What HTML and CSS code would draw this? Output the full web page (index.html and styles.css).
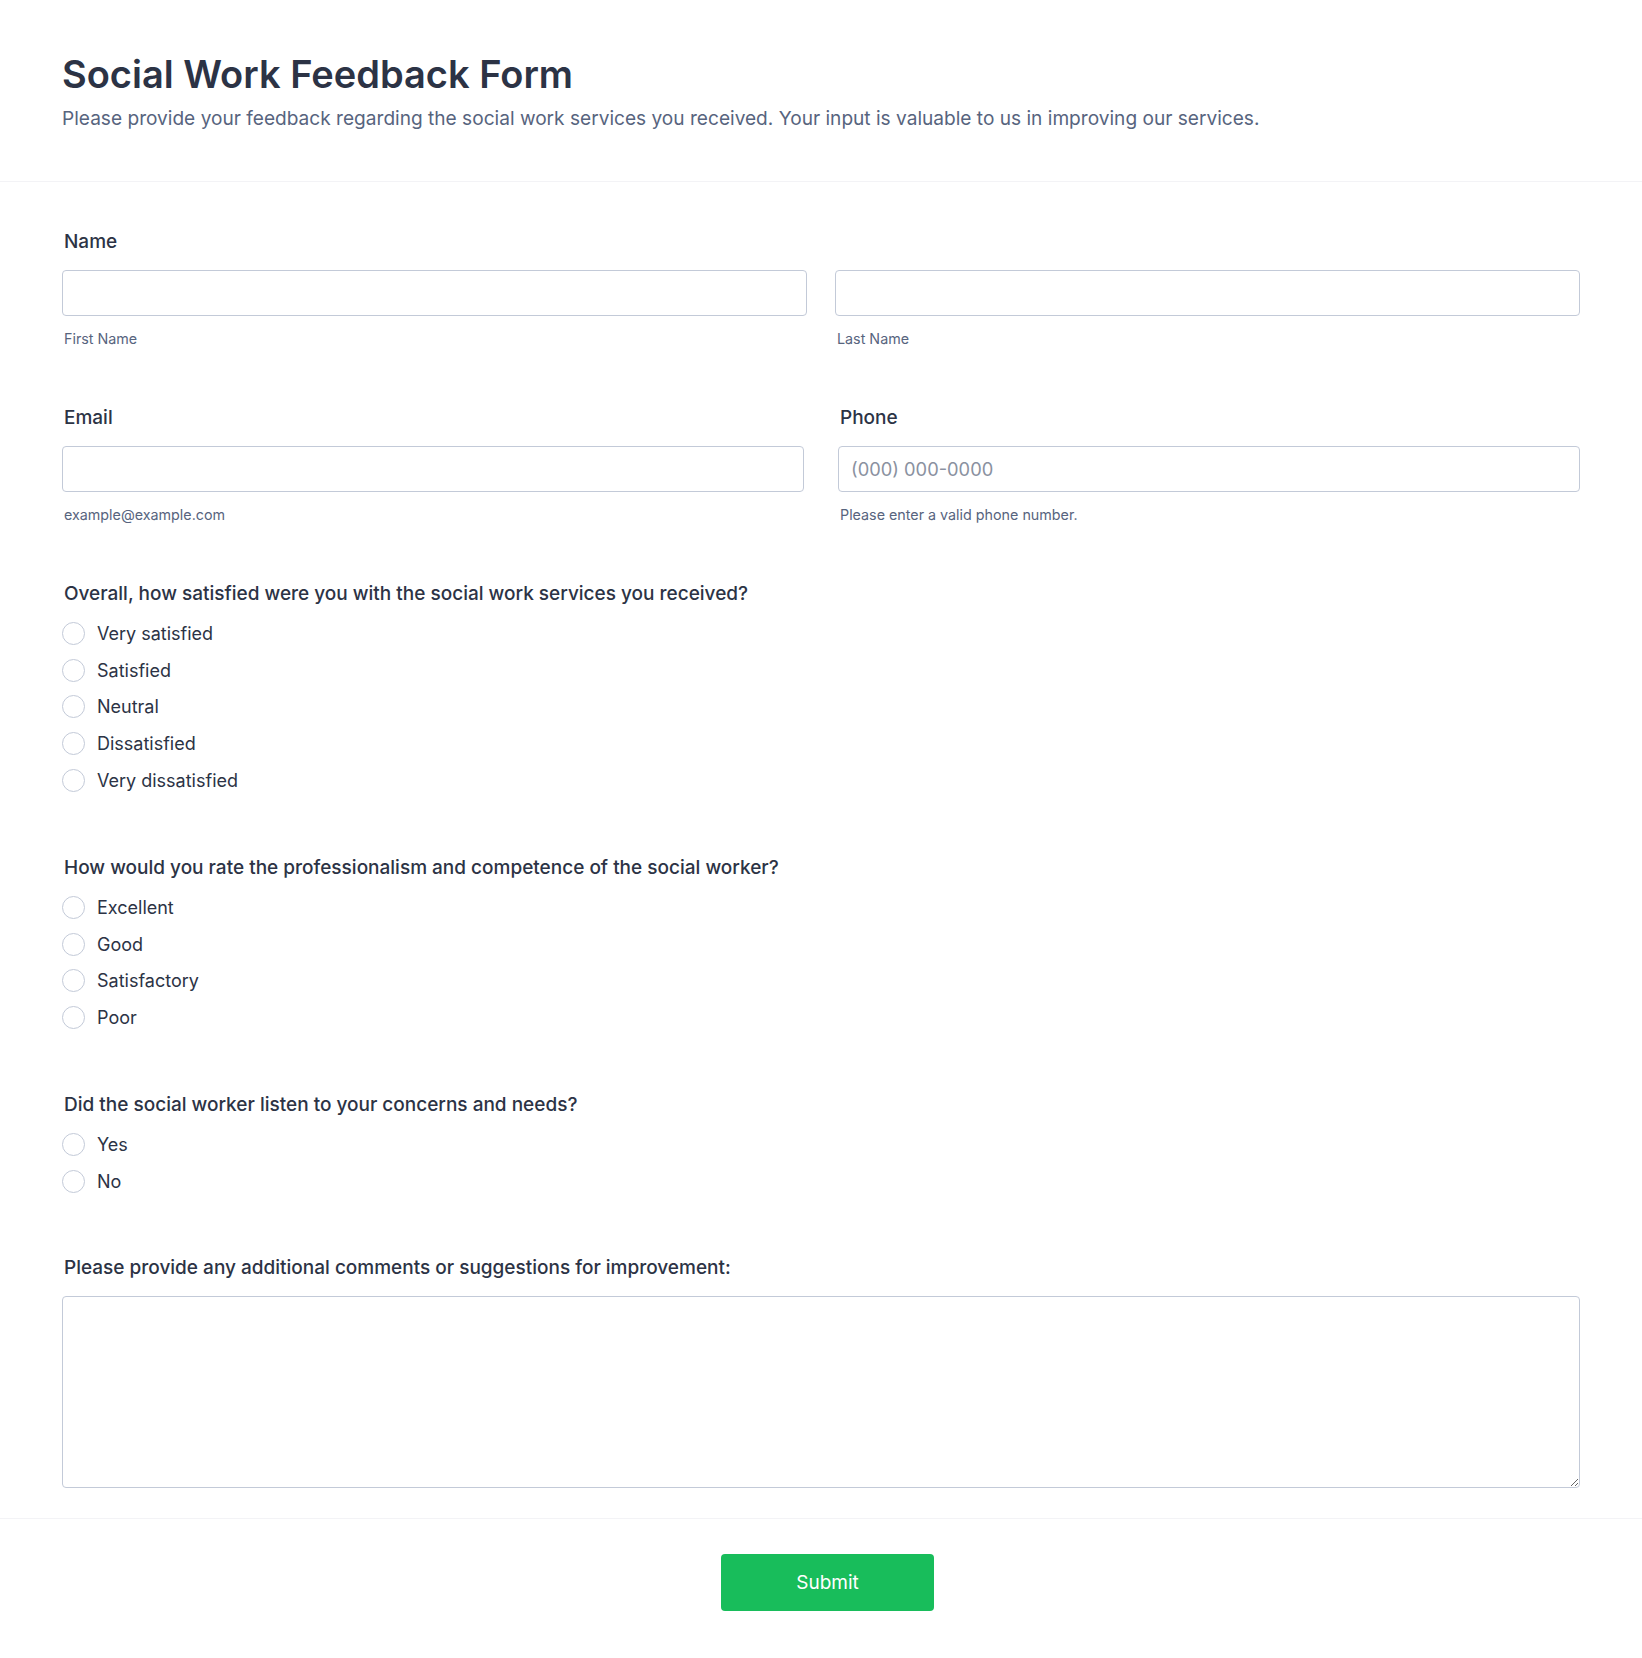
FILE: index.html
```html
<!DOCTYPE html>
<html lang="en">
<head>
<meta charset="utf-8">
<title>Social Work Feedback Form</title>
<link rel="stylesheet" href="styles.css">
</head>
<body>
<header class="form-header">
  <h1 class="form-title">Social Work Feedback Form</h1>
  <p class="form-subtitle">Please provide your feedback regarding the social work services you received. Your input is valuable to us in improving our services.</p>
</header>

<form class="form-body">
  <div class="field field-name">
    <div class="label">Name</div>
    <div class="row row-name">
      <div class="col">
        <input class="text-input" type="text">
        <div class="sublabel">First Name</div>
      </div>
      <div class="col">
        <input class="text-input" type="text">
        <div class="sublabel">Last Name</div>
      </div>
    </div>
  </div>

  <div class="field field-contact">
    <div class="row row-contact">
      <div class="col">
        <div class="label">Email</div>
        <input class="text-input" type="email">
        <div class="sublabel">example@example.com</div>
      </div>
      <div class="col">
        <div class="label">Phone</div>
        <input class="text-input" type="tel" placeholder="(000) 000-0000">
        <div class="sublabel">Please enter a valid phone number.</div>
      </div>
    </div>
  </div>

  <div class="field field-q">
    <div class="label label-q">Overall, how satisfied were you with the social work services you received?</div>
    <div class="options">
      <label class="option"><input type="radio" name="q1"><span>Very satisfied</span></label>
      <label class="option"><input type="radio" name="q1"><span>Satisfied</span></label>
      <label class="option"><input type="radio" name="q1"><span>Neutral</span></label>
      <label class="option"><input type="radio" name="q1"><span>Dissatisfied</span></label>
      <label class="option"><input type="radio" name="q1"><span>Very dissatisfied</span></label>
    </div>
  </div>

  <div class="field field-q">
    <div class="label label-q">How would you rate the professionalism and competence of the social worker?</div>
    <div class="options">
      <label class="option"><input type="radio" name="q2"><span>Excellent</span></label>
      <label class="option"><input type="radio" name="q2"><span>Good</span></label>
      <label class="option"><input type="radio" name="q2"><span>Satisfactory</span></label>
      <label class="option"><input type="radio" name="q2"><span>Poor</span></label>
    </div>
  </div>

  <div class="field field-q">
    <div class="label label-q">Did the social worker listen to your concerns and needs?</div>
    <div class="options">
      <label class="option"><input type="radio" name="q3"><span>Yes</span></label>
      <label class="option"><input type="radio" name="q3"><span>No</span></label>
    </div>
  </div>

  <div class="field field-last">
    <div class="label">Please provide any additional comments or suggestions for improvement:</div>
    <textarea class="text-area"></textarea>
  </div>
</form>

<footer class="form-footer">
  <button class="submit-btn" type="button">Submit</button>
</footer>
</body>
</html>
```

FILE: styles.css
```css
* {
  box-sizing: border-box;
}

body {
  margin: 0;
  background: #ffffff;
  font-family: Inter, "Noto Sans", "Liberation Sans", sans-serif;
  color: #2c3345;
}

.form-header {
  padding: 51px 62px 49.4px;
  border-bottom: 1px solid #f3f3f6;
}

.form-title {
  margin: 0;
  font-size: 38px;
  line-height: 46px;
  font-weight: 560;
  color: #2c3345;
}

.form-subtitle {
  margin: 6.6px 0 0;
  font-size: 19.1px;
  line-height: 28px;
  color: #57647e;
}

.form-body {
  padding: 48px 62px 29.6px;
  border-bottom: 1px solid #f3f3f6;
}

.field {
  margin-bottom: 57.5px;
}

.field-name {
  margin-bottom: 58.5px;
}

.field-contact {
  margin-bottom: 57.5px;
}

.field-q {
  margin-bottom: 61.3px;
}

.field-last {
  margin-bottom: 0;
}

.label {
  padding-left: 2px;
  font-size: 19px;
  line-height: 24px;
  font-weight: 450;
  color: #2c3345;
  margin-bottom: 16px;
}

.label-q {
  margin-bottom: 13.5px;
}

.row {
  display: grid;
  grid-template-columns: 1fr 1fr;
}

.row-name {
  column-gap: 28px;
}

.row-contact {
  column-gap: 34px;
}

.text-input {
  display: block;
  width: 100%;
  height: 46px;
  border: 1px solid #c3cad8;
  border-radius: 4px;
  padding: 0 12px;
  font-family: inherit;
  font-size: 18.3px;
  color: #2c3345;
  background: #fff;
  outline: none;
}

.text-input::placeholder {
  color: #8a91a0;
}

.sublabel {
  padding-left: 2px;
  margin-top: 14px;
  font-size: 14.3px;
  line-height: 18px;
  color: #57647e;
}

.options {
  display: flex;
  flex-direction: column;
  gap: 8.75px;
}

.option {
  display: flex;
  align-items: center;
  height: 28px;
  font-size: 18px;
  color: #2c3345;
}

.option input {
  appearance: none;
  -webkit-appearance: none;
  margin: 0 12px 0 0;
  width: 23px;
  height: 23px;
  border: 1px solid #c3cad8;
  border-radius: 50%;
  background: #fff;
  flex: none;
}

.text-area {
  display: block;
  width: 100%;
  height: 192px;
  border: 1px solid #c3cad8;
  border-radius: 4px;
  padding: 12px;
  font-family: inherit;
  font-size: 18px;
  color: #2c3345;
  background: #fff;
  outline: none;
  resize: vertical;
}

.form-footer {
  display: flex;
  justify-content: center;
  padding: 35px 0 47px 13px;
}

.submit-btn {
  width: 213px;
  height: 57px;
  border: none;
  border-radius: 4px;
  background: #18bd5b;
  color: #ffffff;
  font-family: inherit;
  font-size: 19px;
  font-weight: 420;
  cursor: pointer;
}
```
